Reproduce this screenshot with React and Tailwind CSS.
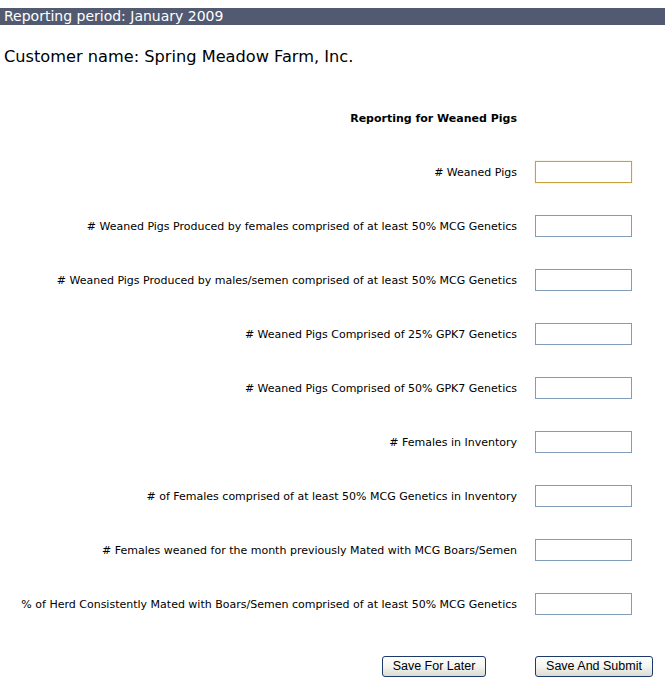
const fields = [
  '# Weaned Pigs',
  '# Weaned Pigs Produced by females comprised of at least 50% MCG Genetics',
  '# Weaned Pigs Produced by males/semen comprised of at least 50% MCG Genetics',
  '# Weaned Pigs Comprised of 25% GPK7 Genetics',
  '# Weaned Pigs Comprised of 50% GPK7 Genetics',
  '# Females in Inventory',
  '# of Females comprised of at least 50% MCG Genetics in Inventory',
  '# Females weaned for the month previously Mated with MCG Boars/Semen',
  '% of Herd Consistently Mated with Boars/Semen comprised of at least 50% MCG Genetics',
]

function XpButton({ children, className }) {
  return (
    <button
      className={`h-[21px] rounded-[3px] border border-[#1c3a6b] bg-gradient-to-b from-white via-[#f4f4f0] to-[#dcdcd4] text-[12.5px] leading-none text-black ${className}`}
      style={{ fontFamily: '"Liberation Sans", Arial, sans-serif' }}
    >
      {children}
    </button>
  )
}

export default function App() {
  return (
    <div
      className="min-h-[685px] w-[665px] bg-white text-black"
      style={{ fontFamily: '"DejaVu Sans", Tahoma, sans-serif' }}
    >
      <div className="mt-[8px] flex h-[17px] items-center bg-[#525a72] pl-[4px] text-[14px] text-white">
        Reporting period: January 2009
      </div>

      <h1 className="mt-[21px] pl-[4px] text-[16.2px] leading-[22px]">
        Customer name: Spring Meadow Farm, Inc.
      </h1>

      <div className="mt-[23px]">
        <div className="flex h-[54px] items-center pt-[2px]">
          <div className="w-[517px] text-right text-[11px] font-bold">
            Reporting for Weaned Pigs
          </div>
        </div>

        {fields.map((label, i) => (
          <div key={label} className="flex h-[54px] items-center">
            <div className="w-[517px] pt-[2px] text-right text-[11px]">{label}</div>
            <input
              type="text"
              className={`ml-[18px] h-[22px] w-[97px] border bg-white outline-none ${
                i === 0 ? 'border-[#c8a03c] shadow-[0_0_1px_#e8c870]' : 'border-[#7f9db9]'
              }`}
            />
          </div>
        ))}

        <div className="mt-[25px] flex items-center">
          <div className="flex w-[517px] justify-end pr-[31px]">
            <XpButton className="w-[104px]">Save For Later</XpButton>
          </div>
          <XpButton className="ml-[18px] w-[118px]">Save And Submit</XpButton>
        </div>
      </div>
    </div>
  )
}
